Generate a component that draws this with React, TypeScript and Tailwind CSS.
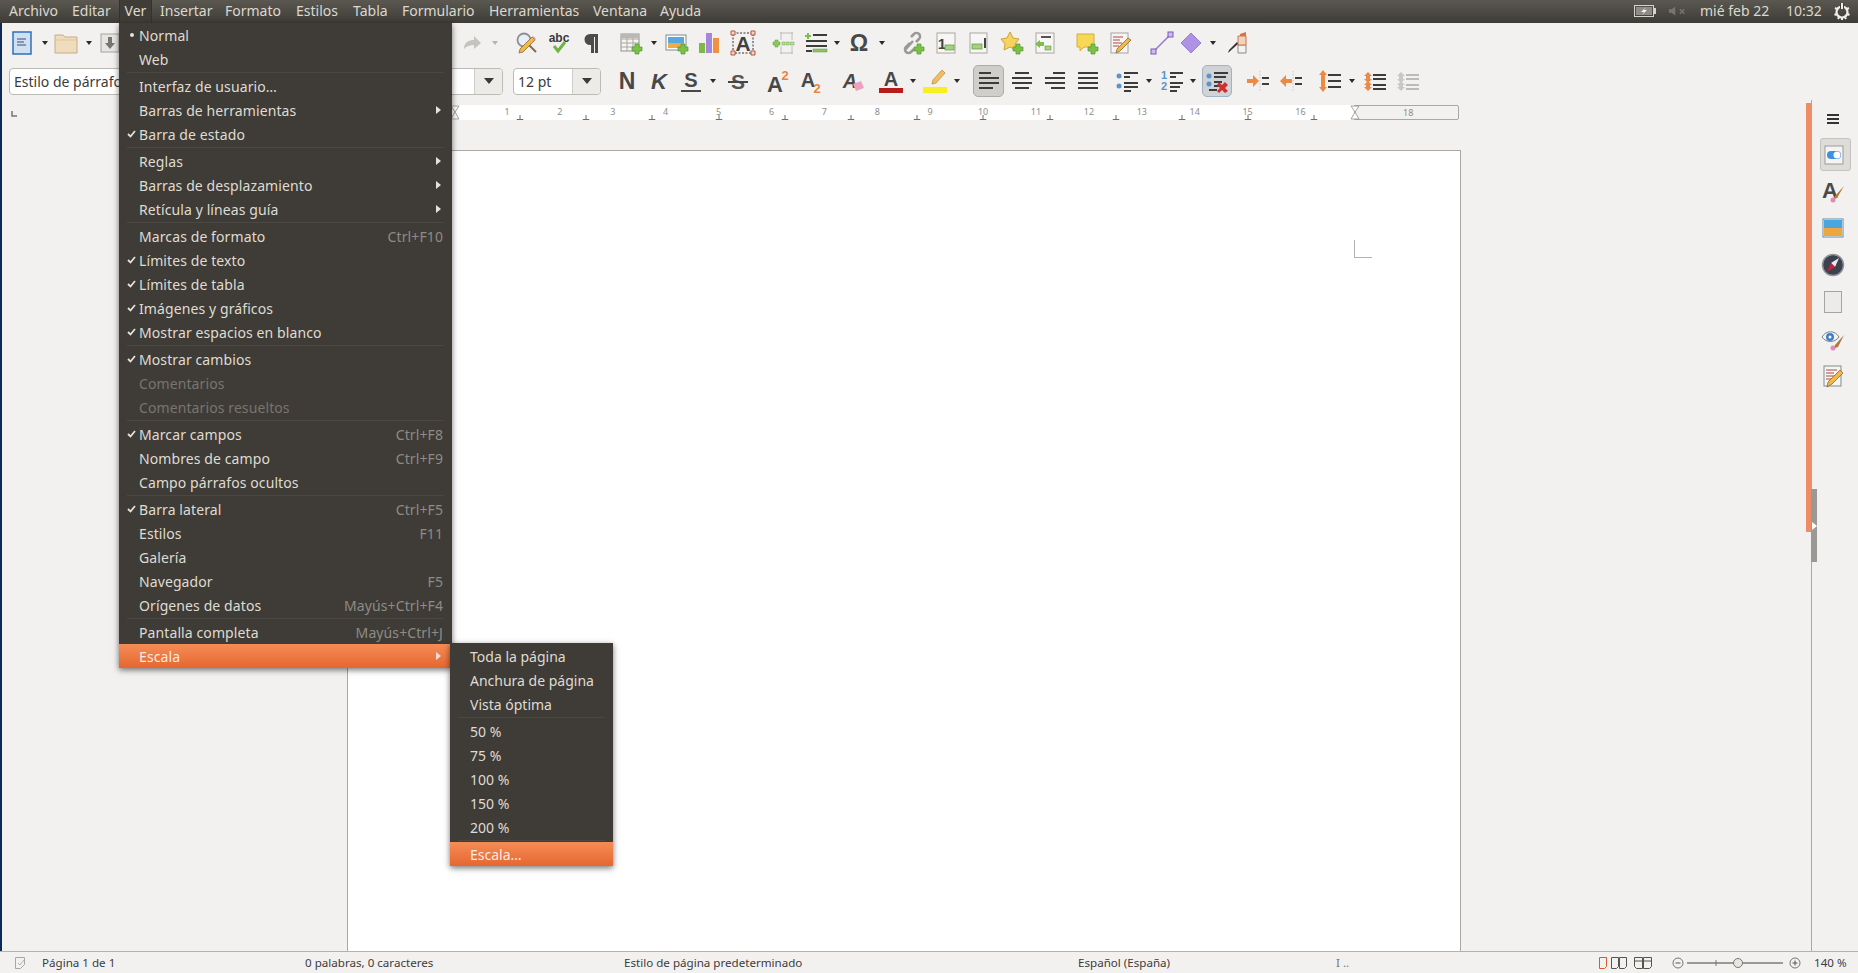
import type { ReactNode } from 'react';

const Ic = ({ children, m = '' }: { children: ReactNode; m?: string }) => (
  <svg viewBox="0 0 24 24" className={`${m} w-6 h-6 shrink-0 overflow-visible`}>
    {children}
  </svg>
);

const Caret = ({ m }: { m: string }) => (
  <svg viewBox="0 0 8 24" className={`${m} w-2 h-6 shrink-0`}>
    <polygon points="1,10 7,10 4,14" fill="#2a2a2a" />
  </svg>
);

const Plus = () => (
  <path d="M16 13h4v3h3v4h-3v3h-4v-3h-3v-4h3z" fill="#7cc04b" stroke="#4f9a2c" strokeWidth="0.7" />
);

const Lines = ({ rows, color = '#3c3c3c' }: { rows: [number, number, number][]; color?: string }) => (
  <>
    {rows.map(([x, y, w], i) => (
      <rect key={i} x={x} y={y} width={w} height="2" fill={color} />
    ))}
  </>
);

const Glyph = ({ t, x = 12, y = 19, s = 21, fill = '#3c3c3c', italic = false }: { t: string; x?: number; y?: number; s?: number; fill?: string; italic?: boolean }) => (
  <text x={x} y={y} fontSize={s} fontWeight="700" fontStyle={italic ? 'italic' : 'normal'} fontFamily="'Liberation Sans', sans-serif" textAnchor="middle" fill={fill}>
    {t}
  </text>
);

function Toolbar1() {
  return (
    <div className="flex items-center h-[39px] pl-[10px]">
      <Ic>
        <rect x="3" y="1" width="18" height="22" fill="#cfe0f3" stroke="#2f71b8" strokeWidth="1.5" />
        <path d="M7 8h9M7 11h7M7 14h9" stroke="#6c7f96" strokeWidth="1.5" />
      </Ic>
      <Caret m="ml-[7px]" />
      <Ic m="ml-[5px]">
        <path d="M1 4h8l2 2h12v16H1z" fill="#efdcbc" stroke="#c4ad86" />
        <path d="M1 9h22" stroke="#dcc59c" />
      </Ic>
      <Caret m="ml-[7px]" />
      <Ic m="ml-[5px]">
        <rect x="3" y="3" width="18" height="18" fill="#e6e5e3" stroke="#a5a4a0" />
        <path d="M10 6h4v6h3l-5 6-5-6h3z" fill="#77766f" />
      </Ic>
      <Ic m="ml-[338px]">
        <path d="M4 18c0-7 5-9 10-9V5l7 7-7 6v-4c-4 0-7 1-10 4z" fill="#c5c4c1" />
      </Ic>
      <Caret m="ml-[7px] opacity-30" />
      <Ic m="ml-[16px]">
        <circle cx="9" cy="9" r="6.5" fill="#e8eef6" stroke="#8d8f96" strokeWidth="1.8" />
        <path d="M13 13l8 8" stroke="#8a6a4a" strokeWidth="2" />
        <path d="M20 9L8 21l-4 1 1-4L17 6z" fill="#f0b94a" stroke="#7d5b24" strokeWidth="0.7" />
        <path d="M20 9l-3-3 1-1 3 3z" fill="#e88ca5" />
      </Ic>
      <Ic m="ml-[8px]">
        <Glyph t="abc" y={11} s={12} fill="#3a3a3a" />
        <path d="M7 15l4 5 7-9" fill="none" stroke="#6fb544" strokeWidth="3" />
      </Ic>
      <Ic m="ml-[9px]">
        <path d="M18 3H10a5.500 5.500 0 0 0 0 11h1v8h3V6h1v16h3z" fill="#4b4b4b" />
      </Ic>
      <Ic m="ml-[15px]">
        <rect x="2" y="3" width="18" height="17" fill="#f5f4f2" stroke="#92918c" />
        <path d="M2 8h18M2 12h18M2 16h18M8 3v17M14 3v17" stroke="#a7a6a2" />
        <path d="M2 3h18v4H2z" fill="#b9b8b4" />
        <Plus />
      </Ic>
      <Caret m="ml-[7px]" />
      <Ic m="ml-[7px]">
        <rect x="1" y="4" width="20" height="15" fill="#fff" stroke="#7f8b92" />
        <rect x="3" y="6" width="16" height="6" fill="#58a8df" />
        <rect x="3" y="12" width="16" height="5" fill="#f0ab45" />
        <Plus />
      </Ic>
      <Ic m="ml-[8px]">
        <rect x="2" y="12" width="6" height="10" fill="#7fb843" />
        <rect x="9" y="2" width="6" height="20" fill="#a587d9" />
        <rect x="16" y="7" width="6" height="15" fill="#ee9146" />
      </Ic>
      <Ic m="ml-[10px]">
        <rect x="2" y="2" width="20" height="20" fill="none" stroke="#333" strokeDasharray="2 1.500" />
        <Glyph t="A" y={20} s={21} fill="#404040" />
        <path d="M0 0h4v4H0zM20 0h4v4h-4zM0 20h4v4H0zM20 20h4v4h-4z" fill="#e8d8d0" stroke="#c0523c" />
      </Ic>
      <Ic m="ml-[17px]">
        <path d="M9 1v8M20 1v8M9 15v8M20 15v8M8 2h13M8 22h13" stroke="#bdbcb8" />
        <path d="M1 11h2V9h3v2h2v3H6v2H3v-2H1z" fill="#8cc95c" stroke="#5a9c3a" strokeWidth="0.5" />
        <path d="M10 11h3v3h-3zM14 11h3v3h-3zM18 11h4v3h-4z" fill="#bcdca3" stroke="#6aa848" strokeWidth="0.5" />
      </Ic>
      <Ic m="ml-[8px]">
        <path d="M3 2h2v2h2v2H5v2H3V6H1V4h2z" fill="#7cc04b" />
        <Lines rows={[[9, 3, 14], [2, 9, 21], [2, 14, 21]]} />
        <rect x="9" y="18" width="14" height="3" fill="#8cc466" stroke="#5a9c3a" strokeWidth="0.5" />
        <rect x="2" y="19" width="6" height="2" fill="#3c3c3c" />
      </Ic>
      <Caret m="ml-[5px]" />
      <Ic m="ml-[6px]">
        <Glyph t="Ω" y={20} s={23} fill="#484848" />
      </Ic>
      <Caret m="ml-[7px]" />
      <Ic m="ml-[15px]">
        <path d="M4 19l8-9M10 6l3-3a3.500 3.500 0 0 1 5 5l-3 3M9 12l-4 4a3.500 3.500 0 0 0 5 5l3-3" fill="none" stroke="#9a9995" strokeWidth="2.500" />
        <Plus />
      </Ic>
      <Ic m="ml-[9px]">
        <rect x="3" y="2" width="18" height="20" fill="#f7f6f4" stroke="#a9a8a4" />
        <Glyph t="1" x={8} y={18} s={15} fill="#444" />
        <rect x="11" y="14" width="9" height="5" fill="#a6d083" stroke="#5a9c3a" strokeWidth="0.7" />
      </Ic>
      <Ic m="ml-[9px]">
        <rect x="3" y="2" width="17" height="20" fill="#f7f6f4" stroke="#a9a8a4" />
        <rect x="5" y="13" width="10" height="5" fill="#a6d083" stroke="#5a9c3a" strokeWidth="0.7" />
        <path d="M18 7v10" stroke="#444" strokeWidth="2" />
      </Ic>
      <Ic m="ml-[9px]">
        <path d="M10 1l3 6 6 1-4 5 1 6-6-3-6 3 1-6-4-5 6-1z" fill="#f5d35e" stroke="#cda23a" />
        <Plus />
      </Ic>
      <Ic m="ml-[9px]">
        <rect x="3" y="2" width="18" height="20" fill="#f7f6f4" stroke="#a9a8a4" />
        <rect x="8" y="5" width="10" height="2" fill="#555" />
        <path d="M2 13l5-4v2h4v4H7v2z" fill="#7cc04b" />
        <rect x="12" y="15" width="6" height="4" fill="#a6d083" stroke="#5a9c3a" strokeWidth="0.6" />
      </Ic>
      <Ic m="ml-[18px]">
        <path d="M2 3h17v13H9l-4 4v-4H2z" fill="#f7d856" stroke="#d2ad3e" />
        <Plus />
      </Ic>
      <Ic m="ml-[10px]">
        <rect x="2" y="2" width="17" height="20" fill="#f6f5f3" stroke="#a4a3a0" />
        <path d="M4 6h10M4 9h7M4 12h9M4 15h6" stroke="#b0483c" strokeWidth="1.200" />
        <path d="M22 9L11 20l-4 2 1-4L19 7z" fill="#f0b94a" stroke="#7d5b24" strokeWidth="0.7" />
      </Ic>
      <Ic m="ml-[17px]">
        <path d="M4 20L20 4" stroke="#9476d2" strokeWidth="1.500" />
        <rect x="1" y="18" width="5" height="5" fill="#cdbdea" stroke="#7a58c0" />
        <rect x="18" y="1" width="5" height="5" fill="#cdbdea" stroke="#7a58c0" />
      </Ic>
      <Ic m="ml-[5px]">
        <path d="M12 2l10 10-10 10L2 12z" fill="#ae92e4" stroke="#9a7ed8" />
      </Ic>
      <Caret m="ml-[6px]" />
      <Ic m="ml-[8px]">
        <path d="M13 14h8v8h-8z" fill="#f3f2f0" stroke="#8a8985" />
        <path d="M13 5h8v9h-8z" fill="#ecd3c4" stroke="#d4743e" />
        <path d="M15 3l6-2v4h-6z" fill="#d4743e" />
        <path d="M13 13L3 22l1-3 8-8z" fill="#333" />
      </Ic>
    </div>
  );
}

const Combo = ({ label, width, divider }: { label: string; width: string; divider: string }) => (
  <div className={`${width} h-[27px] flex shrink-0 rounded-[4px] border border-[#bdbbb6] bg-white overflow-hidden`}>
    <div className="flex-1 pl-[4px] flex items-center text-[14px] text-[#3c3c3c]">{label}</div>
    <div className={`${divider} border-l border-[#cfcdc9] bg-[#ecebe8] flex items-center justify-center`}>
      <svg viewBox="0 0 12 8" className="w-3 h-2">
        <polygon points="1,1 11,1 6,7" fill="#3a3a3a" />
      </svg>
    </div>
  </div>
);

function Toolbar2() {
  return (
    <div className="flex items-center h-[38px] pl-[9px]">
      <Combo label="Estilo de párrafo" width="w-[494px]" divider="w-[28px]" />
      <div className="ml-[10px] flex">
        <Combo label="12 pt" width="w-[88px]" divider="w-[28px]" />
      </div>
      <Ic m="ml-[14px]"><Glyph t="N" s={23} y={20} fill="#484848" /></Ic>
      <Ic m="ml-[8px]"><Glyph t="K" s={22} y={20} italic fill="#484848" /></Ic>
      <Ic m="ml-[8px]">
        <Glyph t="S" s={20} y={18} fill="#484848" />
        <rect x="2" y="21" width="20" height="2" fill="#484848" />
      </Ic>
      <Caret m="ml-[6px]" />
      <Ic m="ml-[9px]">
        <Glyph t="S" s={21} y={20} fill="#555" />
        <rect x="2" y="12" width="20" height="2" fill="#444" />
      </Ic>
      <Ic m="ml-[15px]">
        <Glyph t="A" x={10} s={22} y={23} fill="#484848" />
        <Glyph t="2" x={20} s={13} y={11} fill="#e8853d" />
      </Ic>
      <Ic m="ml-[9px]">
        <Glyph t="A" x={10} s={20} y={18} fill="#484848" />
        <Glyph t="2" x={19} s={13} y={24} fill="#e8853d" />
      </Ic>
      <Ic m="ml-[19px]">
        <Glyph t="A" x={9} s={20} y={19} italic fill="#484848" />
        <path d="M12 15l8-3 3 7-8 3z" fill="#eda0bf" />
      </Ic>
      <Ic m="ml-[14px]">
        <Glyph t="A" s={20} y={17} fill="#484848" />
        <rect x="0" y="19" width="24" height="5" fill="#b61c1c" />
      </Ic>
      <Caret m="ml-[6px]" />
      <Ic m="ml-[6px]">
        <path d="M19 1l3 3-9 10-4 1 1-4z" fill="#f0c060" stroke="#b5852f" strokeWidth="0.7" />
        <rect x="0" y="18" width="24" height="6" fill="#f8f01e" />
      </Ic>
      <Caret m="ml-[6px]" />
      <div className="ml-[12px] w-[31px] h-[32px] flex items-center justify-center rounded-[5px] bg-[#cfcecb] border border-[#adaca8] shrink-0">
        <Ic><Lines rows={[[2, 3, 12], [2, 8, 20], [2, 13, 20], [2, 18, 14]]} /></Ic>
      </div>
      <Ic m="ml-[6px]"><Lines rows={[[5, 3, 14], [2, 8, 20], [2, 13, 20], [5, 18, 14]]} /></Ic>
      <Ic m="ml-[9px]"><Lines rows={[[10, 3, 12], [2, 8, 20], [2, 13, 20], [8, 18, 14]]} /></Ic>
      <Ic m="ml-[9px]"><Lines rows={[[2, 3, 20], [2, 8, 20], [2, 13, 20], [2, 18, 20]]} /></Ic>
      <Ic m="ml-[15px]">
        <circle cx="4" cy="7" r="2.500" fill="#5b93cf" />
        <circle cx="4" cy="17" r="2.500" fill="#5b93cf" />
        <Lines rows={[[9, 3, 14], [9, 7, 6], [9, 13, 14], [9, 17, 14], [9, 21, 7]]} />
      </Ic>
      <Caret m="ml-[6px]" />
      <Ic m="ml-[7px]">
        <Glyph t="1" x={4} y={10} s={11} fill="#5b93cf" />
        <Glyph t="2" x={4} y={21} s={11} fill="#5b93cf" />
        <Lines rows={[[10, 3, 13], [10, 7, 6], [10, 13, 13], [10, 17, 10], [10, 21, 7]]} />
      </Ic>
      <Caret m="ml-[5px]" />
      <div className="ml-[5px] w-[30px] h-[32px] flex items-center justify-center rounded-[5px] bg-[#cfd3d6] border border-[#9fb3c2] shrink-0">
        <Ic>
          <circle cx="4" cy="7" r="2.500" fill="#5b93cf" />
          <circle cx="4" cy="15" r="2.500" fill="#5b93cf" />
          <Lines rows={[[9, 3, 14], [9, 7, 12], [9, 12, 8], [9, 16, 6], [4, 20, 8]]} />
          <path d="M14 13l3 3 3-3 3 3-3 3 3 3-3 2-3-3-3 3-2-2 3-3-3-3z" fill="#d22c2c" />
        </Ic>
      </div>
      <Ic m="ml-[14px]">
        <path d="M1 10h6V6l6 6-6 6v-4H1z" fill="#ec8a45" />
        <path d="M14 2v20" stroke="#c9c8c4" strokeDasharray="1.500 1.500" />
        <Lines rows={[[16, 8, 7], [16, 14, 7]]} />
      </Ic>
      <Ic m="ml-[9px]">
        <path d="M13 10H7V6l-6 6 6 6v-4h6z" fill="#ec8a45" />
        <path d="M14 2v20" stroke="#c9c8c4" strokeDasharray="1.500 1.500" />
        <Lines rows={[[16, 8, 7], [16, 14, 7]]} />
      </Ic>
      <Ic m="ml-[15px]">
        <path d="M5 1l4 5H7v12h2l-4 5-4-5h2V6H1z" fill="#ec8a45" />
        <Lines rows={[[10, 5, 13], [10, 11, 13], [10, 17, 13]]} />
      </Ic>
      <Caret m="ml-[6px]" />
      <Ic m="ml-[7px]">
        <path d="M5 3l4 4H7v3h2l-4 4-4-4h2V7H1zM5 12l4 4H7v2h2l-4 4-4-4h2v-2H1z" fill="#ec8a45" />
        <Lines rows={[[10, 5, 13], [10, 9, 13], [10, 15, 13], [10, 19, 13]]} />
      </Ic>
      <Ic m="ml-[9px]">
        <path d="M5 3l4 4H7v3h2l-4 4-4-4h2V7H1zM5 12l4 4H7v2h2l-4 4-4-4h2v-2H1z" fill="#c9c8c4" />
        <Lines rows={[[10, 5, 13], [10, 9, 13], [10, 15, 13], [10, 19, 13]]} color="#bcbbb7" />
      </Ic>
    </div>
  );
}

const menuBar: [string, string][] = [
  ['Archivo', 'w-[63px]'],
  ['Editar', 'w-[54px]'],
  ['Ver', 'w-[34px]'],
  ['Insertar', 'w-[65px]'],
  ['Formato', 'w-[71px]'],
  ['Estilos', 'w-[57px]'],
  ['Tabla', 'w-[49px]'],
  ['Formulario', 'w-[87px]'],
  ['Herramientas', 'w-[104px]'],
  ['Ventana', 'w-[67px]'],
  ['Ayuda', 'w-[60px]'],
];

function TopBar() {
  return (
    <div className="flex items-center h-[23px] pl-[9px] pb-[2px] bg-gradient-to-b from-[#5b5851] to-[#3e3c37] text-[#dcd8cf] text-[14px] shrink-0">
      {menuBar.map(([label, w]) => (
        <span key={label} className={`${w} shrink-0 whitespace-nowrap`}>
          {label}
        </span>
      ))}
      <div className="ml-auto flex items-center">
        <svg viewBox="0 0 23 12" className="w-[23px] h-3">
          <rect x="0.500" y="0.500" width="19" height="11" fill="none" stroke="#d6d3cb" />
          <rect x="2" y="2" width="16" height="8" fill="#8d8b85" />
          <rect x="20" y="3" width="2" height="6" fill="#d6d3cb" />
          <path d="M12 2L7 7h3L8 10l5-5h-3z" fill="#f2f0ea" />
        </svg>
        <svg viewBox="0 0 22 12" className="ml-[11px] w-[20px] h-3">
          <path d="M1 4h3l4-3v10L4 8H1z" fill="#77756f" />
          <path d="M13 4l5 5M18 4l-5 5" stroke="#77756f" strokeWidth="1.500" />
        </svg>
        <span className="ml-[12px] w-[86px]">mié feb 22</span>
        <span className="w-[47px]">10:32</span>
        <svg viewBox="0 0 18 18" className="w-[18px] h-[18px] mr-[7px]">
          <circle cx="9" cy="10" r="5.500" fill="none" stroke="#f0eee8" strokeWidth="2.200" />
          <path d="M9 7V1" stroke="#3e3c37" strokeWidth="4" />
          <path d="M9 7V1" stroke="#f0eee8" strokeWidth="2" />
          <path d="M2 6l2 1M16 6l-2 1M1.500 13l2-1M16.500 13l-2-1M9 18v-2M5 17l1-2M13 17l-1-2" stroke="#f0eee8" strokeWidth="2" />
        </svg>
      </div>
    </div>
  );
}

const Hourglass = () => (
  <svg viewBox="0 0 10 15" className="w-[10px] h-[15px]">
    <path d="M1 1h8L5 7l4 7H1l4-7z" fill="#fff" stroke="#8f8e8a" strokeWidth="0.800" />
  </svg>
);

const rulerNums = Array.from({ length: 16 }, (_, i) => i + 1);
const rulerTicks = Array.from({ length: 13 }, (_, i) => 520 + i * 66.2);

function Ruler() {
  return (
    <div className="flex h-[15px] mt-[5px] shrink-0 relative">
      <svg viewBox="0 0 6 6" className="ml-[11px] mt-[6px] w-[6px] h-[6px]">
        <path d="M1 0v5h5" fill="none" stroke="#77766f" strokeWidth="1.500" />
      </svg>
      <div className="ml-[330px] w-[1007px] bg-white relative">
        {rulerNums.map((n) => (
          <span
            key={n}
            className="absolute top-0 text-[9px] leading-[13px] text-[#8e8d89] -translate-x-1/2"
            style={{ left: 507 - 347 + (n - 1) * 52.9 }}
          >
            {n}
          </span>
        ))}
        {rulerTicks.map((x) => (
          <svg key={x} viewBox="0 0 7 5" className="absolute bottom-0 w-[7px] h-[5px] -translate-x-1/2" style={{ left: x - 347 }}>
            <path d="M3.500 0v4M0 4.500h7" stroke="#6d6c68" strokeWidth="1" />
          </svg>
        ))}
        <div className="absolute left-[103px] top-0">
          <Hourglass />
        </div>
      </div>
      <div className="w-[105px] border border-[#a9a8a4] rounded-r-[2px] relative">
        <span className="absolute left-[48px] top-0 text-[9px] leading-[13px] text-[#8e8d89]">18</span>
        <span className="absolute -left-[5px] -top-px"><Hourglass /></span>
      </div>
    </div>
  );
}

const Side = ({ children }: { children: ReactNode }) => (
  <div className="w-[26px] h-[34px] mt-[3px] flex items-center justify-center">{children}</div>
);

function Sidebar() {
  return (
    <div className="relative w-[47px] h-full border-l border-[#a9a8a4] shrink-0">
      <div className="h-full bg-[#f3f1ef] pl-[8px] pt-[14px]">
        <div className="flex w-[26px] justify-center">
          <svg viewBox="0 0 12 10" className="w-3 h-[10px]">
            <path d="M0 0h12v2H0zM0 4h12v2H0zM0 8h12v2H0z" fill="#333" />
          </svg>
        </div>
        <div className="mt-[14px] w-[31px] h-[33px] rounded-[3px] bg-[#dddcd9] border border-[#c4c3bf] flex items-center pl-[3px]">
          <svg viewBox="0 0 20 20" className="w-5 h-5">
            <rect x="1" y="1" width="18" height="18" fill="#f4f4f4" stroke="#9a9a98" />
            <rect x="3" y="6" width="14" height="8" rx="4" fill="#3f8fe0" />
            <circle cx="13" cy="10" r="3.500" fill="#fff" />
          </svg>
        </div>
        <Side>
          <Ic>
            <Glyph t="A" x={9} y={19} s={22} fill="#4a4a4a" />
            <path d="M23 7l-9 10-3 4 5-2z" fill="#b0793a" />
            <circle cx="12" cy="21" r="2.500" fill="#e489b4" />
          </Ic>
        </Side>
        <Side>
          <Ic>
            <rect x="2" y="3" width="20" height="18" fill="#fff" stroke="#5f8ea3" />
            <rect x="3" y="4" width="18" height="8" fill="#4ba6e0" />
            <rect x="3" y="12" width="18" height="8" fill="#eea63e" />
          </Ic>
        </Side>
        <Side>
          <Ic>
            <circle cx="12" cy="12" r="10.500" fill="#3c4150" stroke="#92949a" strokeWidth="1.500" />
            <path d="M18 5l-4 9-4-4z" fill="#ececec" />
            <path d="M6 19l4-9 4 4z" fill="#c6203a" />
          </Ic>
        </Side>
        <Side>
          <Ic>
            <rect x="3.500" y="1.500" width="17" height="21" fill="#ecebe9" stroke="#a5a4a0" />
          </Ic>
        </Side>
        <Side>
          <Ic>
            <path d="M1 10c4-7 13-7 17 0-4 6-13 6-17 0z" fill="#f4f4f4" stroke="#7d8288" />
            <circle cx="9" cy="10" r="4" fill="#3d7fc9" />
            <circle cx="9" cy="10" r="1.500" fill="#fff" />
            <path d="M23 8l-9 10-2 4 5-2z" fill="#b0793a" />
            <circle cx="12" cy="21" r="2.500" fill="#e489b4" />
          </Ic>
        </Side>
        <Side>
          <Ic>
            <rect x="3" y="2" width="17" height="20" fill="#f6f5f3" stroke="#7f8a8c" />
            <path d="M5 6h11M5 9h8M5 12h10M5 15h6" stroke="#b0483c" strokeWidth="1.200" />
            <path d="M22 9L11 20l-5 3 1-5L19 6z" fill="#f0b94a" stroke="#7d5b24" strokeWidth="0.7" />
          </Ic>
        </Side>
      </div>
      {/* sidebar collapse handle */}
      <div className="absolute -left-px top-[389px] w-[6px] h-[73px] bg-[#9b9995] flex items-center justify-center">
        <svg viewBox="0 0 5 8" className="w-[5px] h-2">
          <polygon points="0,0 5,4 0,8" fill="#fff" />
        </svg>
      </div>
    </div>
  );
}

const PageIcons = () => (
  <svg viewBox="0 0 64 14" className="w-16 h-[14px]">
    <path d="M1.500 1.500h7v9l-2 2h-5z" fill="none" stroke="#d65a2b" />
    <path d="M13.500 1.500h7v9l-2 2h-5zM21.500 1.500h7v9l-2 2h-5z" fill="none" stroke="#55544f" />
    <path d="M36.500 1.500h8v11h-6l-2-2zM45.500 1.500h8v9l-2 2h-6z" fill="none" stroke="#55544f" />
    <path d="M36.500 5h17" stroke="#55544f" />
  </svg>
);

function StatusBar() {
  return (
    <div className="flex items-center h-[22px] shrink-0 border-t border-[#b5b3ae] bg-[#f3f1ef] text-[11.6px] text-[#3c3c3c] whitespace-nowrap">
      <svg viewBox="0 0 10 12" className="ml-[15px] w-[10px] h-3">
        <path d="M0.500 0.500h9v7l-4 4h-5z" fill="none" stroke="#a8a7a3" />
        <path d="M3 6l2 2 4-5" fill="none" stroke="#b3b2ae" />
      </svg>
      <span className="ml-[17px] w-[263px]">Página 1 de 1</span>
      <span className="w-[319px]">0 palabras, 0 caracteres</span>
      <span className="w-[454px]">Estilo de página predeterminado</span>
      <span className="w-[258px]">Español (España)</span>
      <span className="w-[262px] text-[#77766f]">I ..</span>
      <PageIcons />
      <svg viewBox="0 0 130 14" className="ml-[9px] w-[130px] h-[14px]">
        <circle cx="7" cy="7" r="5" fill="none" stroke="#77766f" />
        <path d="M4.500 7h5" stroke="#55544f" />
        <path d="M16 7h96" stroke="#9a9995" strokeWidth="2" />
        <path d="M45 4v6" stroke="#77766f" />
        <circle cx="67" cy="7" r="4.500" fill="#e8e6e3" stroke="#77766f" />
        <circle cx="124" cy="7" r="5" fill="none" stroke="#77766f" />
        <path d="M121.500 7h5M124 4.500v5" stroke="#55544f" />
      </svg>
      <span className="ml-[13px]">140 %</span>
    </div>
  );
}

type Row = { label?: string; mark?: 'dot' | 'check'; key?: string; sub?: boolean; off?: boolean; on?: boolean; sep?: boolean };

const verRows: Row[] = [
  { label: 'Normal', mark: 'dot' },
  { label: 'Web' },
  { sep: true },
  { label: 'Interfaz de usuario…' },
  { label: 'Barras de herramientas', sub: true },
  { label: 'Barra de estado', mark: 'check' },
  { sep: true },
  { label: 'Reglas', sub: true },
  { label: 'Barras de desplazamiento', sub: true },
  { label: 'Retícula y líneas guía', sub: true },
  { sep: true },
  { label: 'Marcas de formato', key: 'Ctrl+F10' },
  { label: 'Límites de texto', mark: 'check' },
  { label: 'Límites de tabla', mark: 'check' },
  { label: 'Imágenes y gráficos', mark: 'check' },
  { label: 'Mostrar espacios en blanco', mark: 'check' },
  { sep: true },
  { label: 'Mostrar cambios', mark: 'check' },
  { label: 'Comentarios', off: true },
  { label: 'Comentarios resueltos', off: true },
  { sep: true },
  { label: 'Marcar campos', mark: 'check', key: 'Ctrl+F8' },
  { label: 'Nombres de campo', key: 'Ctrl+F9' },
  { label: 'Campo párrafos ocultos' },
  { sep: true },
  { label: 'Barra lateral', mark: 'check', key: 'Ctrl+F5' },
  { label: 'Estilos', key: 'F11' },
  { label: 'Galería' },
  { label: 'Navegador', key: 'F5' },
  { label: 'Orígenes de datos', key: 'Mayús+Ctrl+F4' },
  { sep: true },
  { label: 'Pantalla completa', key: 'Mayús+Ctrl+J' },
  { label: 'Escala', sub: true, on: true },
];

const zoomRows: Row[] = [
  { label: 'Toda la página' },
  { label: 'Anchura de página' },
  { label: 'Vista óptima' },
  { sep: true },
  { label: '50 %' },
  { label: '75 %' },
  { label: '100 %' },
  { label: '150 %' },
  { label: '200 %' },
  { sep: true },
  { label: 'Escala…', on: true },
];

function MenuRows({ rows }: { rows: Row[] }) {
  return (
    <>
      {rows.map((r, i) =>
        r.sep ? (
          <div key={i} className="h-[3px] py-px px-[8px]">
            <div className="h-px bg-[#4b4843]" />
          </div>
        ) : (
          <div
            key={i}
            className={`flex items-center h-6 pr-[9px] ${
              r.on ? 'bg-gradient-to-b from-[#f58c55] to-[#e6662f] text-[#f8ebe2]' : r.off ? 'text-[#78756f]' : 'text-[#dfdbd2]'
            }`}
          >
            <span className="w-5 pr-[3px] flex justify-end shrink-0">
              {r.mark === 'dot' && <span className="w-1 h-1 mr-[2px] rounded-full bg-[#e6e2d9]" />}
              {r.mark === 'check' && (
                <svg viewBox="0 0 9 8" className="w-[9px] h-2">
                  <path d="M1 4l2.500 2.500L8 1" fill="none" stroke="#e6e2d9" strokeWidth="1.800" />
                </svg>
              )}
            </span>
            <span className="flex-1 whitespace-nowrap">{r.label}</span>
            {r.key && <span className="text-[#8e8b85] whitespace-nowrap">{r.key}</span>}
            {r.sub && (
              <svg viewBox="0 0 5 8" className="w-[5px] h-2 mr-[2px]">
                <polygon points="0,0 5,4 0,8" fill="#e6e2d9" />
              </svg>
            )}
          </div>
        ),
      )}
    </>
  );
}

export default function App() {
  return (
    <div className="relative w-[1858px] h-[973px] overflow-hidden flex flex-col bg-[#f3f1ef] text-[#3c3c3c] font-['Noto_Sans',sans-serif]">
      <TopBar />
      <div className="flex flex-col flex-1 min-h-0 border-l-2 border-[#0c2a55]">
        <div className="-ml-[2px] shrink-0">
          <Toolbar1 />
          <Toolbar2 />
        </div>
        <div className="flex flex-1 min-h-0 -ml-[2px]">
          <div className="w-[1806px] flex flex-col shrink-0">
            <Ruler />
            <div className="flex-1 min-h-0 mt-[30px] ml-[347px] w-[1114px] bg-white border-l border-t border-r border-[#a9a8a4] relative">
              <div className="absolute left-[1006px] top-[89px] w-[18px] h-[18px] border-l border-b border-[#b3b2ae]" />
            </div>
          </div>
          <div className="w-[5px] h-[429px] mt-[3px] bg-[#ee8c66] shrink-0" />
          <Sidebar />
        </div>
        <div className="-ml-[2px]">
          <StatusBar />
        </div>
      </div>

      {/* open "Ver" menu title */}
      <div className="absolute left-[119px] top-0 w-[33px] h-6 pb-[3px] bg-[#403d38] border-x border-[#34322e] flex items-center justify-center text-[14px] text-[#dfdbd2]">
        Ver
      </div>
      <div className="absolute left-[119px] top-[23px] w-[333px] bg-[#3f3c37] text-[14px] tracking-[0.1px] shadow-[0_2px_6px_rgba(0,0,0,0.55)]">
        <MenuRows rows={verRows} />
      </div>
      <div className="absolute left-[450px] top-[643px] w-[163px] bg-[#3f3c37] text-[14px] pt-px shadow-[0_2px_6px_rgba(0,0,0,0.55)]">
        <MenuRows rows={zoomRows} />
      </div>
    </div>
  );
}
